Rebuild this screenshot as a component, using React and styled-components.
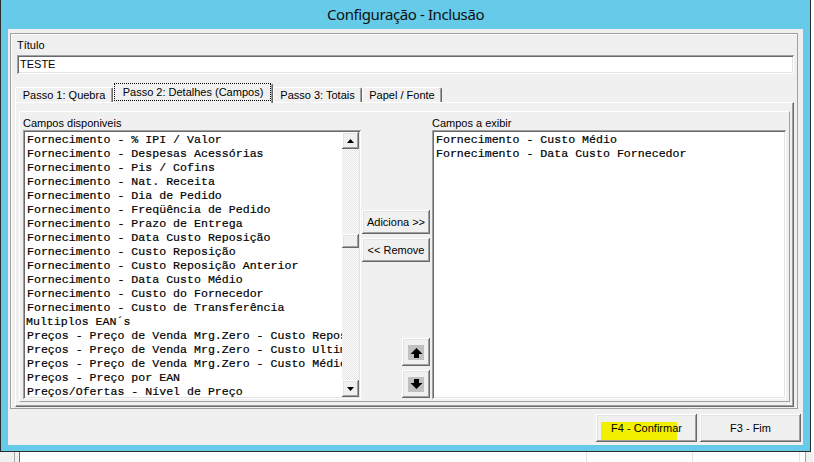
import React from 'react';
import styled, { createGlobalStyle, css } from 'styled-components';

const Global = createGlobalStyle`
  html, body { margin: 0; padding: 0; background: #ffffff; overflow: hidden; }
  body { width: 814px; height: 462px; font-family: "Liberation Sans", Arial, sans-serif; font-size: 11px; color: #000; }
  * { box-sizing: border-box; }
`;

const raised = css`
  background: #f0f0f0;
  box-shadow: inset -1px -1px #696969, inset 1px 1px #ffffff, inset -2px -2px #a0a0a0, inset 2px 2px #e3e3e3;
`;

const sunken = css`
  box-shadow: inset 1px 1px #a0a0a0, inset -1px -1px #ffffff, inset 2px 2px #696969, inset -2px -2px #e3e3e3;
`;

const Screen = styled.div`
  width: 814px;
  height: 462px;
  display: flex;
  flex-direction: column;
`;

const Window = styled.div`
  width: 811px;
  height: 452px;
  background: #65cbe9;
  border: 1px solid #2b2b2b;
  border-top: none;
  padding: 0 7px 6px 7px;
  display: flex;
  flex-direction: column;
`;

const TitleBar = styled.div`
  height: 29px;
  flex: none;
  display: flex;
  align-items: center;
  justify-content: center;
  font-family: "Noto Sans", "Open Sans", sans-serif;
  font-size: 15px;
  letter-spacing: -0.4px;
  color: #111;
  padding-bottom: 1px;
`;

const Client = styled.div`
  flex: 1;
  background: #f0f0f0;
  display: flex;
  flex-direction: column;
  padding: 4px 2px 0 2px;
`;

const OuterPanel = styled.div`
  width: 788px;
  height: 376px;
  border: 1px solid #a0a0a0;
  box-shadow: inset 1px 1px #ffffff;
  padding: 5px 3px 0 4px;
  display: flex;
  flex-direction: column;
`;

const FieldLabel = styled.div`
  line-height: 13px;
  height: 13px;
  margin-left: 2px;
`;

const TextInput = styled.div`
  margin-top: 3px;
  margin-left: 2px;
  width: 777px;
  height: 19px;
  background: #fff;
  ${sunken};
  padding: 3px 0 0 3px;
  line-height: 13px;
`;

const TabStrip = styled.div`
  margin-top: 9px;
  height: 19px;
  display: flex;
  align-items: flex-end;
  position: relative;
  z-index: 1;
`;

const Tab = styled.div`
  position: relative;
  width: ${p => p.$w}px;
  height: ${p => (p.$active ? 20 : 15)}px;
  margin-bottom: ${p => (p.$active ? -1 : 0)}px;
  background: #f0f0f0;
  border-top: 1px solid #ffffff;
  border-left: 1px solid #ffffff;
  border-right: 1px solid #696969;
  border-top-left-radius: 2px;
  border-top-right-radius: 2px;
  box-shadow: inset -1px 0 #a0a0a0;
  display: flex;
  align-items: center;
  justify-content: center;
  padding-bottom: ${p => (p.$active ? 3 : 0)}px;
  line-height: 13px;
  white-space: nowrap;
  ${p => p.$active && css`
    &::after {
      content: "";
      position: absolute;
      left: 0;
      top: -1px;
      right: 1px;
      bottom: 2px;
      border: 1px dotted #000;
    }
  `}
`;

const TabPanel = styled.div`
  width: 779px;
  height: 305px;
  border-top: 1px solid #ffffff;
  border-left: 1px solid #ffffff;
  border-right: 1px solid #696969;
  border-bottom: 1px solid #696969;
  box-shadow: inset -1px -1px #a0a0a0;
  padding: 8px 0 0 3px;
`;

const GroupBox = styled.div`
  width: 771px;
  height: 291px;
  border: 1px solid;
  border-color: #ffffff #a0a0a0 #a0a0a0 #ffffff;
  padding: 2px 0 0 3px;
  display: grid;
  grid-template-columns: 338px 71px 354px;
  grid-template-rows: 16px 269px;
`;

const GroupLabel = styled.div`
  padding-top: 3px;
  line-height: 13px;
  white-space: nowrap;
`;

const ListBox = styled.div`
  background: #fff;
  ${sunken};
  padding: 2px;
  display: flex;
  overflow: hidden;
`;

const Items = styled.div`
  flex: 1;
  overflow: hidden;
  padding: 1px 0 0 2px;
  font-family: "Liberation Mono", "Courier New", monospace;
  font-size: 11.6px;
  color: #000;
  -webkit-text-stroke: 0.2px #000;
`;

const Item = styled.div`
  height: 14px;
  line-height: 14px;
  white-space: nowrap;
  margin-left: ${p => (p.$shift ? -1 : 0)}px;
`;

const ScrollBar = styled.div`
  width: 17px;
  flex: none;
  display: flex;
  flex-direction: column;
`;

const ScrollBtn = styled.div`
  ${raised};
  width: 17px;
  height: 17px;
  flex: none;
  display: flex;
  align-items: center;
  justify-content: center;
`;

const Track = styled.div`
  flex: 1;
  background: repeating-conic-gradient(#e4e4e4 0 25%, #ffffff 0 50%) 0 0 / 2px 2px;
  padding-top: 85px;
`;

const Thumb = styled.div`
  ${raised};
  height: 14px;
`;

const MiddleCol = styled.div`
  display: flex;
  flex-direction: column;
  align-items: flex-start;
  padding-left: 1px;
`;

const PushButton = styled.div`
  ${raised};
  position: relative;
  width: ${p => p.$w}px;
  height: ${p => p.$h}px;
  margin-top: ${p => p.$mt || 0}px;
  margin-left: ${p => p.$ml || 0}px;
  display: flex;
  align-items: center;
  justify-content: center;
  white-space: nowrap;
  line-height: 13px;
  flex: none;
`;

const BtnText = styled.span`
  position: relative;
  z-index: 1;
`;

const Highlight = styled.span`
  position: absolute;
  left: 5px;
  top: 8px;
  width: 76px;
  height: 18px;
  background: #f2f000;
`;

const ButtonRow = styled.div`
  margin-top: 5px;
  display: flex;
  justify-content: flex-end;
  gap: 3px;
`;

const BelowStrip = styled.div`
  height: 10px;
  display: flex;
`;

const BelowCell = styled.div`
  width: ${p => p.$w}px;
  height: 10px;
  background: ${p => p.$bg || '#ffffff'};
  border-right: 1px solid ${p => p.$line || '#e3e3e3'};
`;

const UpTri = () => (
  <svg width="7" height="4" viewBox="0 0 7 4"><polygon points="0,4 7,4 3.5,0" fill="#000" /></svg>
);
const DownTri = () => (
  <svg width="7" height="4" viewBox="0 0 7 4"><polygon points="0,0 7,0 3.5,4" fill="#000" /></svg>
);
const ArrowUp = () => (
  <svg width="16" height="15" viewBox="0 0 16 15">
    <rect width="16" height="15" fill="#c0c0c0" />
    <path d="M8.5 3 L14.5 9 H11 V13 H6 V9 H2.5 Z" fill="#000" />
  </svg>
);
const ArrowDown = () => (
  <svg width="16" height="15" viewBox="0 0 16 15">
    <rect width="16" height="15" fill="#c0c0c0" />
    <path d="M8.5 12 L14.5 6 H11 V2 H6 V6 H2.5 Z" fill="#000" />
  </svg>
);

const available = [
  'Fornecimento - % IPI / Valor',
  'Fornecimento - Despesas Acessórias',
  'Fornecimento - Pis / Cofins',
  'Fornecimento - Nat. Receita',
  'Fornecimento - Dia de Pedido',
  'Fornecimento - Freqüência de Pedido',
  'Fornecimento - Prazo de Entrega',
  'Fornecimento - Data Custo Reposição',
  'Fornecimento - Custo Reposição',
  'Fornecimento - Custo Reposição Anterior',
  'Fornecimento - Data Custo Médio',
  'Fornecimento - Custo do Fornecedor',
  'Fornecimento - Custo de Transferência',
  'Multiplos EAN´s',
  'Preços - Preço de Venda Mrg.Zero - Custo Reposição',
  'Preços - Preço de Venda Mrg.Zero - Custo Ultima Entrada',
  'Preços - Preço de Venda Mrg.Zero - Custo Médio',
  'Preços - Preço por EAN',
  'Preços/Ofertas - Nível de Preço',
];

const shown = ['Fornecimento - Custo Médio', 'Fornecimento - Data Custo Fornecedor'];

const tabs = [
  { label: 'Passo 1: Quebra', w: 98 },
  { label: 'Passo 2: Detalhes (Campos)', w: 160, active: true },
  { label: 'Passo 3: Totais', w: 89 },
  { label: 'Papel / Fonte', w: 80 },
];

export default function App() {
  return (
    <Screen>
      <Global />
      <Window>
        <TitleBar>Configuração - Inclusão</TitleBar>
        <Client>
          <OuterPanel>
            <FieldLabel>Título</FieldLabel>
            <TextInput>TESTE</TextInput>
            <TabStrip>
              {tabs.map(t => (
                <Tab key={t.label} $w={t.w} $active={t.active}>{t.label}</Tab>
              ))}
            </TabStrip>
            <TabPanel>
              <GroupBox>
                <GroupLabel>Campos disponiveis</GroupLabel>
                <div />
                <GroupLabel>Campos a exibir</GroupLabel>
                <ListBox>
                  <Items>
                    {available.map(s => (
                      <Item key={s} $shift={s.startsWith('Multiplos')}>{s}</Item>
                    ))}
                  </Items>
                  <ScrollBar>
                    <ScrollBtn><UpTri /></ScrollBtn>
                    <Track><Thumb /></Track>
                    <ScrollBtn><DownTri /></ScrollBtn>
                  </ScrollBar>
                </ListBox>
                <MiddleCol>
                  <PushButton $w={68} $h={24} $mt={80}>Adiciona &gt;&gt;</PushButton>
                  <PushButton $w={68} $h={24} $mt={4}>&lt;&lt; Remove</PushButton>
                  <PushButton $w={28} $h={28} $mt={76} $ml={40}><ArrowUp /></PushButton>
                  <PushButton $w={28} $h={28} $mt={4} $ml={40}><ArrowDown /></PushButton>
                </MiddleCol>
                <ListBox>
                  <Items>
                    {shown.map(s => <Item key={s}>{s}</Item>)}
                  </Items>
                </ListBox>
              </GroupBox>
            </TabPanel>
          </OuterPanel>
          <ButtonRow>
            <PushButton $w={101} $h={28}>
              <Highlight />
              <BtnText>F4 - Confirmar</BtnText>
            </PushButton>
            <PushButton $w={101} $h={28}>
              <BtnText>F3 - Fim</BtnText>
            </PushButton>
          </ButtonRow>
        </Client>
      </Window>
      <BelowStrip>
        <BelowCell $w={15} $bg="#f0f0f0" $line="#a9a9a9" />
        <BelowCell $w={5} $bg="#f0f0f0" $line="#6d6d6d" />
        <BelowCell $w={567} />
        <BelowCell $w={106} />
        <BelowCell $w={107} />
        <BelowCell $w={6} $line="#a0a0a0" />
        <BelowCell $w={7} $bg="#f0f0f0" $line="#f0f0f0" />
      </BelowStrip>
    </Screen>
  );
}
